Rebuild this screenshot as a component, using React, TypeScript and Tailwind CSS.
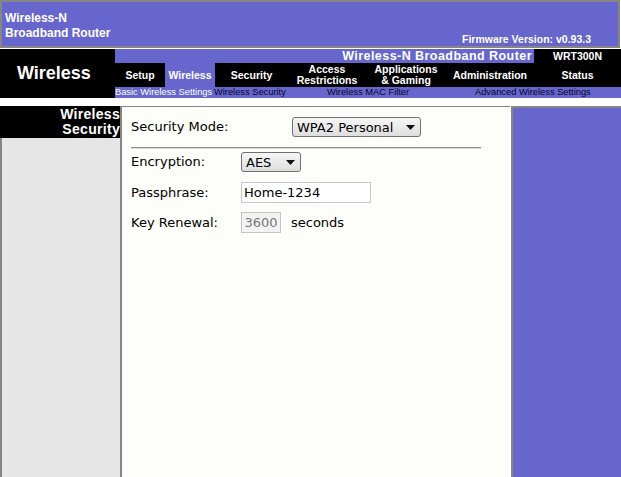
import React from "react";

const arial = "font-['Liberation_Sans',Arial,sans-serif]";
const verdana = "font-['DejaVu_Sans',Verdana,sans-serif]";

const tabs = [
  { label: ["Setup"], w: "w-[50px]" },
  { label: ["Wireless"], w: "w-[50px]", active: true },
  { label: ["Security"], w: "w-[73px]" },
  { label: ["Access", "Restrictions"], w: "w-[78px]" },
  { label: ["Applications", "& Gaming"], w: "w-[80px]" },
  { label: ["Administration"], w: "w-[88px]" },
  { label: ["Status"], w: "flex-1" },
];

const Arrow = () => (
  <svg width="9" height="5" viewBox="0 0 9 5" className="shrink-0">
    <path d="M0 0 H9 L4.5 5 Z" fill="#111" />
  </svg>
);

const Select = ({ value, w, pl }: { value: string; w: string; pl: string }) => (
  <div
    className={`${w} ${pl} h-[20px] flex items-center justify-between pr-[5px] rounded-[3px] border border-[#707070] bg-gradient-to-b from-[#f6f6f6] to-[#dedede] text-[13px] text-black`}
  >
    <span className="leading-none">{value}</span>
    <Arrow />
  </div>
);

export default function App() {
  return (
    <div className={`${arial} w-[621px] h-[477px] overflow-hidden bg-white flex flex-col`}>
      {/* top banner */}
      <div className="w-[620px] h-[48px] shrink-0 border-2 border-[#868686] bg-[#6666cc] flex justify-between">
        <div className="pl-[3px] pt-[9px] text-white font-bold text-[12px] leading-[15px]">
          <div>Wireless-N</div>
          <div>Broadband Router</div>
        </div>
        <div className="self-end pr-[27px] pb-[1px] text-white font-bold text-[10.5px] leading-[11px]">
          Firmware Version: v0.93.3
        </div>
      </div>

      {/* navigation */}
      <div className="mt-[1px] h-[49px] shrink-0 flex">
        <div className="w-[115px] bg-black flex items-center pl-[17px] text-white font-bold text-[18px]">
          Wireless
        </div>
        <div className="flex-1 flex flex-col">
          <div className="h-[14px] flex">
            <div className="flex-1 bg-[#6666cc] text-right pr-[2px] text-white font-bold text-[12.5px] leading-[14px] tracking-[0.45px]">
              Wireless-N Broadband Router
            </div>
            <div className="w-[87px] bg-black text-center text-white font-bold text-[10.5px] leading-[14px]">
              WRT300N
            </div>
          </div>
          <div className="h-[24px] bg-black flex">
            {tabs.map((t) => (
              <div
                key={t.label.join(" ")}
                className={`${t.w} flex flex-col items-center justify-center text-white font-bold text-[10.5px] leading-[11px] ${
                  t.active ? "bg-[#6666cc]" : ""
                }`}
              >
                {t.label.map((l) => (
                  <span key={l} className="whitespace-nowrap">
                    {l}
                  </span>
                ))}
              </div>
            ))}
          </div>
          <div className="h-[11px] bg-[#6666cc] flex text-[9.3px] leading-[11px] whitespace-nowrap">
            <div className="w-[99px] text-white">Basic Wireless Settings</div>
            <div className="w-[113px] text-[#05052a]">Wireless Security</div>
            <div className="w-[148px] text-[#05052a]">Wireless MAC Filter</div>
            <div className="flex-1 text-[#05052a]">Advanced Wireless Settings</div>
          </div>
        </div>
      </div>

      <div className="h-[8px] shrink-0" />

      {/* body */}
      <div className="flex-1 flex min-h-0">
        <div className="w-[120px] flex flex-col">
          <div className="h-[32px] bg-black text-right text-white font-bold text-[14px] leading-[15px] tracking-[0.3px] pt-[1px]">
            <div>Wireless</div>
            <div>Security</div>
          </div>
          <div className="flex-1 bg-[#e6e6e6] border-l-2 border-[#868686]" />
        </div>

        <div className={`${verdana} w-[390px] border-l-2 border-t border-[#868686] bg-[#fdfdf9] pl-[9px] pt-[10px] text-[13px] text-black`}>
          <div className="h-[20px] flex items-center">
            <div className="w-[161px]">Security Mode:</div>
            <Select value="WPA2 Personal" w="w-[129px]" pl="pl-[4px]" />
          </div>

          <div className="mt-[10px] w-[350px] h-[2px] border-t border-b border-t-[#8c8c8c] border-b-[#dcdcdc]" />

          <div className="mt-[3px] h-[20px] flex items-center">
            <div className="w-[110px]">Encryption:</div>
            <Select value="AES" w="w-[60px]" pl="pl-[4px]" />
          </div>

          <div className="mt-[10px] h-[21px] flex items-center">
            <div className="w-[110px]">Passphrase:</div>
            <div className="w-[130px] h-[21px] border border-[#c4c8d2] bg-white pl-[2px] flex items-center">
              Home-1234
            </div>
          </div>

          <div className="mt-[9px] h-[21px] flex items-center">
            <div className="w-[110px]">Key Renewal:</div>
            <div className="w-[40px] h-[21px] border border-[#c4c4c4] bg-[#f3f3f3] text-[#777] flex items-center justify-center">
              3600
            </div>
            <div className="ml-[10px]">seconds</div>
          </div>
        </div>

        <div className="flex-1 border-l-2 border-t-2 border-[#868686] bg-[#6666cc] ml-[1px]" />
      </div>
    </div>
  );
}
